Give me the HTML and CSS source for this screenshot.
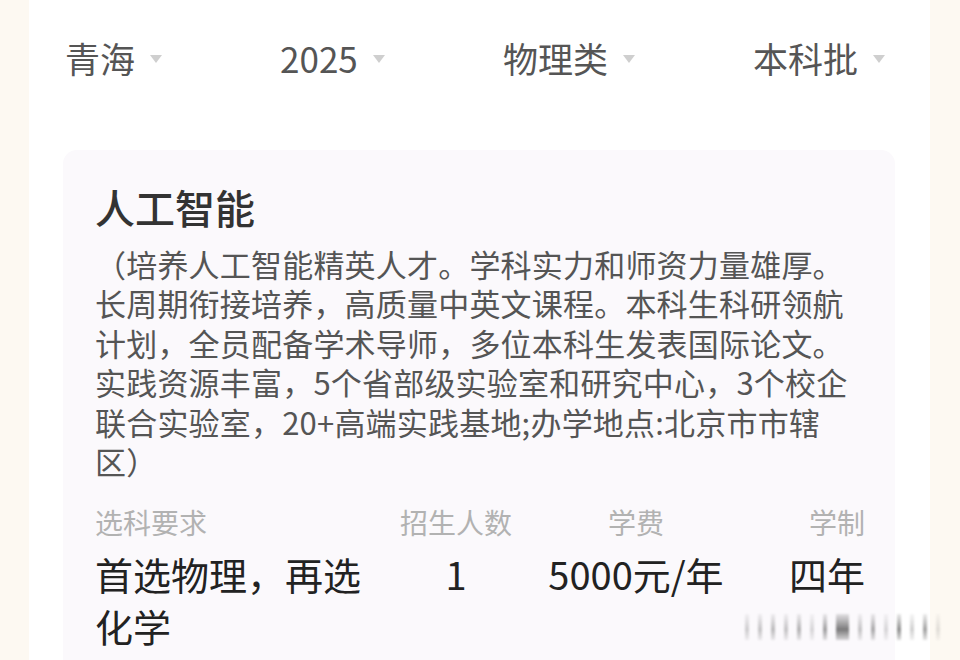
FILE: index.html
```html
<!DOCTYPE html>
<html lang="zh-CN">
<head>
<meta charset="utf-8">
<title>人工智能</title>
<link rel="stylesheet" href="styles.css">
</head>
<body>
<div class="page">
  <div class="filters">
    <div class="filter"><span>青海</span><i class="tri"></i></div>
    <div class="filter"><span>2025</span><i class="tri"></i></div>
    <div class="filter"><span>物理类</span><i class="tri"></i></div>
    <div class="filter"><span>本科批</span><i class="tri"></i></div>
  </div>
  <div class="card">
    <div class="title">人工智能</div>
    <p class="desc">（培养人工智能精英人才。学科实力和师资力量雄厚。长周期衔接培养，高质量中英文课程。本科生科研领航计划，全员配备学术导师，多位本科生发表国际论文。实践资源丰富，5个省部级实验室和研究中心，3个校企联合实验室，20+高端实践基地;办学地点:北京市市辖区）</p>
    <div class="stats">
      <div class="stat s1"><div class="label">选科要求</div><div class="value">首选物理，再选化学</div></div>
      <div class="stat s2"><div class="label">招生人数</div><div class="value">1</div></div>
      <div class="stat s3"><div class="label">学费</div><div class="value">5000元/年</div></div>
      <div class="stat s4"><div class="label">学制</div><div class="value">四年</div></div>
    </div>
  </div>
</div>
<div class="mark">
  <span class="b" style="opacity:.25"></span><span class="b" style="opacity:.3"></span><span class="b" style="opacity:.35"></span><span class="b" style="opacity:.3"></span><span class="b" style="opacity:.4"></span><span class="b" style="opacity:.2"></span><span class="b" style="opacity:.5"></span><span class="b wide" style="opacity:.7"></span><span class="b" style="opacity:.3"></span><span class="b" style="opacity:.45"></span><span class="b" style="opacity:.2"></span><span class="b" style="opacity:.6"></span><span class="b" style="opacity:.25"></span><span class="b" style="opacity:.5"></span><span class="b" style="opacity:.15"></span>
</div>
</body>
</html>
```
FILE: styles.css
```css
html, body {
  margin: 0;
  padding: 0;
  height: 660px;
  overflow: hidden;
}
body {
  background: #fdf9f2;
  font-family: "Noto Sans CJK SC", "Noto Sans", sans-serif;
  position: relative;
}
.page {
  margin-left: 29px;
  width: 901px;
  height: 660px;
  background: #ffffff;
  overflow: hidden;
}
.filters {
  display: flex;
  justify-content: space-between;
  align-items: center;
  padding: 38px 45px 0 36px;
  height: 40px;
}
.filter {
  display: flex;
  align-items: center;
  font-size: 35px;
  line-height: 40px;
  color: #555555;
}
.tri {
  display: block;
  width: 0;
  height: 0;
  margin-left: 15px;
  margin-top: 2px;
  border-left: 6px solid transparent;
  border-right: 6px solid transparent;
  border-top: 8px solid #cfcfcf;
}
.card {
  margin: 72px 35px 0 34px;
  background: #fbf9fc;
  border-radius: 14px;
  padding: 33px 30px 40px 32px;
  height: 600px;
}
.title {
  font-size: 40px;
  line-height: 48px;
  font-weight: 500;
  color: #333333;
}
.desc {
  margin: 13px 0 0;
  font-size: 31px;
  letter-spacing: 0.2px;
  line-height: 39.4px;
  color: #555555;
}
.stats {
  display: grid;
  grid-template-columns: 280px 162px 198px 1fr;
  margin-top: 24px;
}
.label {
  font-size: 28px;
  line-height: 36px;
  color: #b2b2b2;
}
.value {
  margin-top: 8px;
  font-size: 38px;
  line-height: 52px;
  color: #222222;
}
.s2, .s3 { text-align: center; }
.s4 { text-align: right; }
.mark {
  position: absolute;
  left: 745px;
  top: 614px;
  width: 195px;
  height: 26px;
  display: flex;
  gap: 9px;
  align-items: stretch;
}
.b {
  display: block;
  width: 4px;
  background: linear-gradient(to bottom, rgba(80,80,80,0.2), #444444 60%, rgba(80,80,80,0.3));
  filter: blur(0.8px);
}
.b.wide {
  width: 14px;
}
```
